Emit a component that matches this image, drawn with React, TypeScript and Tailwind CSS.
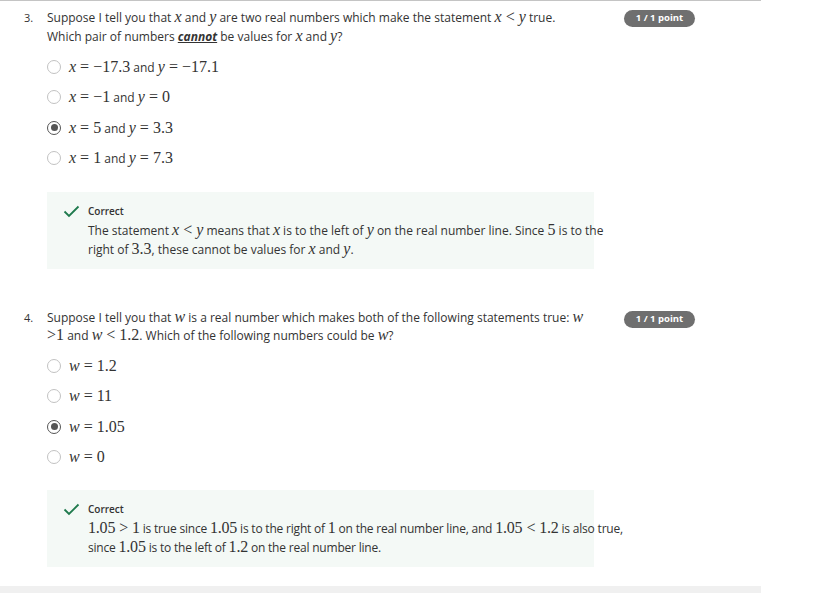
import React from "react";

const V = ({ children }: { children: React.ReactNode }) => (
  <span className="font-['Liberation_Serif',serif] italic text-[16px] leading-none">{children}</span>
);
const N = ({ children }: { children: React.ReactNode }) => (
  <span className="font-['Liberation_Serif',serif] text-[16px] leading-none">{children}</span>
);
const Op = ({ children }: { children: React.ReactNode }) => (
  <span className="font-['Liberation_Serif',serif] text-[16px] leading-none mx-[4px]">{children}</span>
);

function Radio({ checked }: { checked?: boolean }) {
  return (
    <span
      className={
        "w-[14px] h-[14px] rounded-full border flex items-center justify-center shrink-0 " +
        (checked ? "border-[#555] border-[1.5px]" : "border-[#c2c2c2]")
      }
    >
      {checked && <span className="w-[7px] h-[7px] rounded-full bg-[#555]" />}
    </span>
  );
}

function Option({ checked, children }: { checked?: boolean; children: React.ReactNode }) {
  return (
    <div className="h-[30.5px] flex items-center gap-[8px] pl-[47px] text-[12px] text-[#333]">
      <Radio checked={checked} />
      <span className="leading-none">{children}</span>
    </div>
  );
}

function Badge() {
  return (
    <div className="ml-[32px] mt-[2px] h-[17px] w-[71px] rounded-full bg-[#6f6f6f] text-white text-[9.5px] font-bold flex items-center justify-center shrink-0">
      1 / 1 point
    </div>
  );
}

function Feedback({ children, mt }: { children: React.ReactNode; mt: string }) {
  return (
    <div className={"ml-[47px] w-[547px] h-[77px] bg-[#f4f9f6] pt-[13px] " + mt}>
      <div className="flex items-center h-[14px]">
        <svg width="17" height="13" viewBox="0 0 17 13" className="ml-[16px]">
          <path d="M1.5 6.5 L6 11 L15.5 1.5" fill="none" stroke="#1f7a4d" strokeWidth="1.8" />
        </svg>
        <span className="ml-[8px] text-[10px] font-semibold text-[#333]">Correct</span>
      </div>
      <div className="ml-[41px] w-[530px] mt-[2.5px] text-[12px] leading-[19px] text-[#333]">
        {children}
      </div>
    </div>
  );
}

export default function App() {
  return (
    <div className="w-[819px] h-[593px] bg-white overflow-hidden font-['Open_Sans',sans-serif] text-[#333]">
      <div className="w-[761px] border-t border-[#c4c4c4]">
        {/* Question 3 */}
        <div className="flex pt-[6.5px] pl-[24px]">
          <div className="w-[23px] text-[11px] leading-[19px]">3.</div>
          <div className="w-[545px] text-[12px] leading-[19px]">
            Suppose I tell you that <V>x</V> and <V>y</V> are two real numbers which make the statement{" "}
            <V>x</V>
            <Op>&lt;</Op>
            <V>y</V> true.
            <br />
            Which pair of numbers <b className="italic underline">cannot</b> be values for <V>x</V> and <V>y</V>?
          </div>
          <Badge />
        </div>
        <div className="mt-[6px]">
          <Option>
            <V>x</V>
            <Op>=</Op>
            <N>−17.3</N> and <V>y</V>
            <Op>=</Op>
            <N>−17.1</N>
          </Option>
          <Option>
            <V>x</V>
            <Op>=</Op>
            <N>−1</N> and <V>y</V>
            <Op>=</Op>
            <N>0</N>
          </Option>
          <Option checked>
            <V>x</V>
            <Op>=</Op>
            <N>5</N> and <V>y</V>
            <Op>=</Op>
            <N>3.3</N>
          </Option>
          <Option>
            <V>x</V>
            <Op>=</Op>
            <N>1</N> and <V>y</V>
            <Op>=</Op>
            <N>7.3</N>
          </Option>
        </div>
        <Feedback mt="mt-[18px]">
          The statement <V>x</V>
          <Op>&lt;</Op>
          <V>y</V> means that <V>x</V> is to the left of <V>y</V> on the real number line. Since <N>5</N> is to the
          <br />
          right of <N>3.3</N>, these cannot be values for <V>x</V> and <V>y</V>.
        </Feedback>

        {/* Question 4 */}
        <div className="flex pt-[40px] pl-[24px]">
          <div className="w-[23px] text-[11px] leading-[18px]">4.</div>
          <div className="w-[545px] text-[12px] leading-[18px]">
            Suppose I tell you that <V>w</V> is a real number which makes both of the following statements true: <V>w</V>
            <br />
            <N>&gt;1</N> and <V>w</V>
            <Op>&lt;</Op>
            <N>1.2</N>. Which of the following numbers could be <V>w</V>?
          </div>
          <Badge />
        </div>
        <div className="mt-[6px]">
          <Option>
            <V>w</V>
            <Op>=</Op>
            <N>1.2</N>
          </Option>
          <Option>
            <V>w</V>
            <Op>=</Op>
            <N>11</N>
          </Option>
          <Option checked>
            <V>w</V>
            <Op>=</Op>
            <N>1.05</N>
          </Option>
          <Option>
            <V>w</V>
            <Op>=</Op>
            <N>0</N>
          </Option>
        </div>
        <Feedback mt="mt-[17px]">
          <span className="whitespace-nowrap tracking-[-0.2px]">
            <N>1.05</N>
            <Op>&gt;</Op>
            <N>1</N> is true since <N>1.05</N> is to the right of <N>1</N> on the real number line, and <N>1.05</N>
            <Op>&lt;</Op>
            <N>1.2</N> is also true,
            <br />
            since <N>1.05</N> is to the left of <N>1.2</N> on the real number line.
          </span>
        </Feedback>
      </div>
      <div className="mt-[19px] w-[761px] h-[8px] bg-[#f0f0f0]" />
    </div>
  );
}
